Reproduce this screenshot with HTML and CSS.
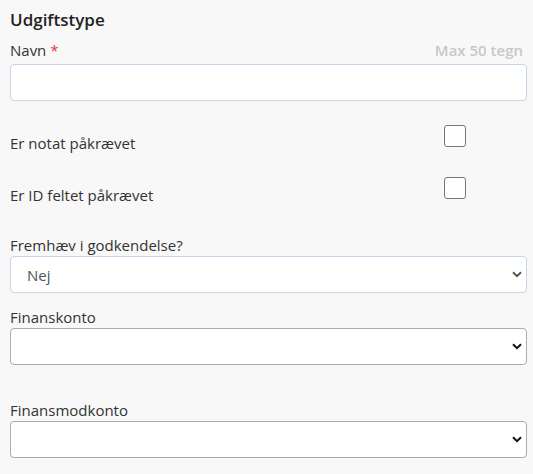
FILE: index.html
```html
<!DOCTYPE html>
<html lang="da">
<head>
<meta charset="utf-8">
<link rel="stylesheet" href="styles.css">
</head>
<body>
<form class="form">
  <h5 class="title">Udgiftstype</h5>

  <div class="field-head">
    <label class="label" for="navn">Navn <span class="req">*</span></label>
    <span class="hint">Max 50 tegn</span>
  </div>
  <input class="control control-blue" id="navn" type="text">

  <div class="check-row check-row-1">
    <span class="check-label">Er notat påkrævet</span>
    <input class="check" type="checkbox">
  </div>
  <div class="check-row check-row-2">
    <span class="check-label">Er ID feltet påkrævet</span>
    <input class="check" type="checkbox">
  </div>

  <label class="label label-fremhaev">Fremhæv i godkendelse?</label>
  <div class="select-wrap">
    <select class="control control-blue select"><option>Nej</option></select>
    <svg class="chev chev-grey" width="10" height="7" viewBox="0 0 10 7"><path d="M1 1.2 L5 5.2 L9 1.2" fill="none" stroke="currentColor" stroke-width="2"/></svg>
  </div>

  <label class="label label-finans">Finanskonto</label>
  <div class="select-wrap">
    <select class="control control-grey select"><option></option></select>
    <svg class="chev" width="10" height="7" viewBox="0 0 10 7"><path d="M1 1.2 L5 5.2 L9 1.2" fill="none" stroke="currentColor" stroke-width="2"/></svg>
  </div>

  <label class="label label-modkonto">Finansmodkonto</label>
  <div class="select-wrap">
    <select class="control control-grey select"><option></option></select>
    <svg class="chev" width="10" height="7" viewBox="0 0 10 7"><path d="M1 1.2 L5 5.2 L9 1.2" fill="none" stroke="currentColor" stroke-width="2"/></svg>
  </div>
</form>
</body>
</html>
```
FILE: styles.css
```css
html, body {
  margin: 0;
  padding: 0;
  background: #f8f8f8;
}
body {
  font-family: "Open Sans", "Noto Sans", sans-serif;
  font-size: 15px;
  color: #333;
  height: 474px;
  overflow: hidden;
}
.form {
  padding: 8px 6px 0 10px;
  display: flex;
  flex-direction: column;
}
.title {
  margin: 0;
  font-size: 17px;
  font-weight: 600;
  line-height: 24px;
  color: #222;
}
.field-head {
  margin-top: 8px;
  display: flex;
  justify-content: space-between;
  line-height: 20px;
}
.label {
  display: block;
  line-height: 20px;
  color: #333;
}
.req {
  color: #e8343c;
}
.hint {
  color: #c8c8c8;
  font-weight: 600;
  padding-right: 4px;
}
.control {
  display: block;
  box-sizing: border-box;
  width: 100%;
  height: 37px;
  margin: 0;
  background: #fff;
  border-radius: 4px;
  font-family: inherit;
  font-size: 15px;
  outline: none;
}
.control-blue {
  border: 1px solid #c7d5e8;
}
.control-grey {
  border: 1px solid #ababab;
}
#navn {
  margin-top: 4px;
  padding: 0 12px;
}
.check-row {
  display: grid;
  grid-template-columns: 434px 22px;
  align-items: start;
}
.check-row-1 { margin-top: 24px; }
.check-row-2 { margin-top: 24.5px; }
.check-label {
  padding-top: 7.5px;
  line-height: 20px;
}
.check {
  appearance: none;
  -webkit-appearance: none;
  margin: 0;
  width: 22px;
  height: 22px;
  box-sizing: border-box;
  border: 1.5px solid #777;
  border-radius: 3px;
  background: #fff;
}
.label-fremhaev { margin-top: 30.5px; }
.label-finans { margin-top: 13.5px; }
.label-modkonto { margin-top: 35.5px; }
.select-wrap {
  position: relative;
  margin-top: 1px;
}
.select {
  appearance: none;
  -webkit-appearance: none;
  padding: 0 30px 0 16px;
  color: #4a5560;
}
.chev {
  position: absolute;
  right: 5px;
  top: 15px;
  color: #111;
  pointer-events: none;
}
.chev-grey {
  color: #555;
}
```
